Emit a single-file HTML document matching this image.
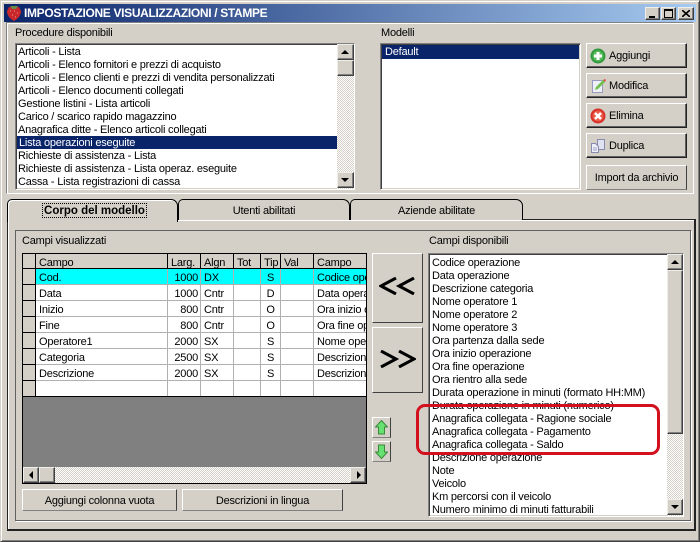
<!DOCTYPE html>
<html><head><meta charset="utf-8"><style>
html,body{margin:0;padding:0}
body{width:700px;height:542px;overflow:hidden;position:relative;background:#d4d0c8;font:11px/15px "Liberation Sans",sans-serif;letter-spacing:-.22px;color:#000}
div,span{position:absolute;box-sizing:border-box;white-space:nowrap}
.sunk{background:#fff;border:1px solid;border-color:#808080 #fff #fff #808080;box-shadow:inset 1px 1px 0 #404040,inset -1px -1px 0 #d4d0c8}
.btn{background:#d4d0c8;border:1px solid;border-color:#fff #222 #222 #fff;box-shadow:inset -1px -1px 0 #606060;text-align:center}
.flat{background:#d4d0c8;border:1px solid;border-color:#fff #808080 #808080 #fff;text-align:center}
.sb{width:16px;height:16px;background:#d4d0c8;border:1px solid;border-color:#f0eee8 #404040 #404040 #f0eee8;box-shadow:inset -1px -1px 0 #808080}
.tri{width:0;height:0;border:4px solid transparent}
.track{background-color:#fff;background-image:conic-gradient(#d4d0c8 25%,#fff 0 50%,#d4d0c8 0 75%,#fff 0);background-size:2px 2px}
.it{left:3px;height:13px}
.l1 .it{left:2px}
.hl{background:#0a246a;color:#fff}
.tab{top:199px;height:21px;background:#d4d0c8;border:1px solid #000;border-bottom:0;border-radius:5px 7px 0 0;text-align:center;line-height:22px}
.grow{left:13px;width:332px;height:16px;border-bottom:1px solid #b0b0b0}
.c{top:0;height:16px;line-height:19px;overflow:hidden;padding:0 0 0 3px;border-right:1px solid #b0b0b0}
.h{top:0;height:16px;line-height:20px;overflow:hidden;padding-left:3px;background:#d4d0c8;border-right:1px solid #000;border-bottom:1px solid #000}
.ind{left:0;width:13px;height:16px;background:#d4d0c8;border-right:1px solid #000;border-bottom:1px solid #000}
.r{text-align:right;padding:0 2px 0 0}
svg{position:absolute}
</style></head><body>

<div style="left:0;top:0;width:700px;height:542px;border:1px solid;border-color:#d4d0c8 #404040 #404040 #d4d0c8;box-shadow:inset 1px 1px 0 #fff,inset -1px -1px 0 #808080"></div>

<div style="left:4px;top:4px;width:692px;height:18px;background:linear-gradient(90deg,#0a246a,#a6caf0)"></div>
<svg style="left:6px;top:5px" width="16" height="17" viewBox="0 0 16 17"><path d="M3 2 L8 3 L13 2 L15 6 Q15 12 8 16 Q1 12 1 6Z" fill="#c8282c"/><path d="M4 1h8l-2 3H6z" fill="#6a8a4a"/><path d="M4 6h1M8 6h1M11 8h1M6 10h1M9 12h1" stroke="#f0a090"/></svg>
<div style="left:24px;top:5px;height:16px;line-height:16px;color:#fff;font-weight:bold;font-size:12px;letter-spacing:-.33px">IMPOSTAZIONE VISUALIZZAZIONI / STAMPE</div>

<div class="sb" style="left:645px;top:7px;width:15px;height:13px"><div style="left:3px;top:8px;width:6px;height:2px;background:#000"></div></div>
<div class="sb" style="left:661px;top:7px;width:15px;height:13px"><div style="left:2px;top:1px;width:9px;height:9px;border:1px solid #000;border-top-width:2px"></div></div>
<div class="sb" style="left:678px;top:7px;width:16px;height:13px"><svg style="left:3px;top:2px" width="8" height="7"><path d="M0 0L8 7M8 0L0 7" stroke="#000" stroke-width="1.6"/></svg></div>

<div style="left:6px;top:22px;width:688px;height:172px;border:1px solid;border-color:#808080 #fff #fff #808080;box-shadow:inset 1px 1px 0 #fff"></div>

<div style="left:15px;top:26px">Procedure disponibili</div>
<div class="sunk l1" style="left:15px;top:43px;width:340px;height:147px;overflow:hidden">
<div class="it" style="top:1px">Articoli - Lista</div>
<div class="it" style="top:14px">Articoli - Elenco fornitori e prezzi di acquisto</div>
<div class="it" style="top:27px">Articoli - Elenco clienti e prezzi di vendita personalizzati</div>
<div class="it" style="top:40px">Articoli - Elenco documenti collegati</div>
<div class="it" style="top:53px">Gestione listini - Lista articoli</div>
<div class="it" style="top:66px">Carico / scarico rapido magazzino</div>
<div class="it" style="top:79px">Anagrafica ditte - Elenco articoli collegati</div>
<div class="hl" style="left:1px;top:92px;width:320px;height:13px;padding-left:2px">Lista operazioni eseguite</div>
<div class="it" style="top:105px">Richieste di assistenza - Lista</div>
<div class="it" style="top:118px">Richieste di assistenza - Lista operaz. eseguite</div>
<div class="it" style="top:131px">Cassa - Lista registrazioni di cassa</div>
</div>
<div class="track" style="left:337px;top:44px;width:17px;height:145px"></div>
<div class="sb" style="left:337px;top:44px;width:17px"><div class="tri" style="left:3px;top:1px;border-bottom-color:#000"></div></div>
<div class="sb" style="left:337px;top:60px;width:17px;height:16px"></div>
<div class="sb" style="left:337px;top:172px;width:17px"><div class="tri" style="left:3px;top:5px;border-top-color:#000"></div></div>

<div style="left:381px;top:26px">Modelli</div>
<div class="sunk" style="left:380px;top:43px;width:201px;height:147px">
<div class="hl" style="left:1px;top:1px;width:197px;height:14px;padding-left:3px">Default</div>
</div>

<div class="btn" style="left:586px;top:43px;width:101px;height:25px;text-align:left;padding:5px 0 0 22px">Aggiungi</div>
<svg style="left:590px;top:48px" width="16" height="16" viewBox="0 0 16 16"><circle cx="8" cy="8" r="7.5" fill="#2f9a3c"/><circle cx="8" cy="8" r="5.5" fill="#55b85a"/><path d="M8 4v8M4 8h8" stroke="#fff" stroke-width="3"/></svg>
<div class="btn" style="left:586px;top:73px;width:101px;height:25px;text-align:left;padding:5px 0 0 22px">Modifica</div>
<svg style="left:591px;top:78px" width="16" height="16" viewBox="0 0 16 16"><path d="M1.500 2.500h10v12h-10z" fill="#eef0f8" stroke="#9a9ac0"/><path d="M4 12l1-3 7-7 2 2-7 7z" fill="#70c050"/><path d="M12 2l2 2 1-2-1-1z" fill="#d85040"/></svg>
<div class="btn" style="left:586px;top:103px;width:101px;height:25px;text-align:left;padding:5px 0 0 22px">Elimina</div>
<svg style="left:590px;top:108px" width="16" height="16" viewBox="0 0 16 16"><circle cx="8" cy="8" r="7.500" fill="#d83028"/><circle cx="8" cy="8" r="5.500" fill="#ea5a48"/><path d="M5 5l6 6M11 5l-6 6" stroke="#fff" stroke-width="2.600"/></svg>
<div class="btn" style="left:586px;top:133px;width:101px;height:25px;text-align:left;padding:5px 0 0 22px">Duplica</div>
<svg style="left:590px;top:138px" width="16" height="16" viewBox="0 0 16 16"><path d="M7.500 1.500h7v10h-7z" fill="#dfe2f0" stroke="#8a8ab0"/><path d="M1.500 5.500h4l3 3v6h-7z" fill="#eef0f8" stroke="#8a8ab0"/><path d="M3 10h4M3 12h4" stroke="#a0a0c8"/></svg>
<div class="flat" style="left:586px;top:165px;width:101px;height:25px;line-height:24px;border-color:#fff #404040 #808080 #fff">Import da archivio</div>

<div style="left:7px;top:219px;width:689px;height:312px;border:1px solid #222;border-width:1px 2px 2px 1px;box-shadow:inset 1px 1px 0 #fff"></div>
<div class="tab" style="left:178px;width:172px">Utenti abilitati</div>
<div class="tab" style="left:350px;width:173px">Aziende abilitate</div>
<div class="tab" style="left:7px;width:171px;height:23px;z-index:2;border-bottom:0;font-weight:bold;letter-spacing:0;box-shadow:inset 1px 1px 0 #fff"><span style="left:34px;top:3px;width:105px;height:15px;line-height:15px;border:1px dotted #000;font-size:11.500px">Corpo del modello</span></div>

<div style="left:15px;top:230px;width:676px;height:291px;border:1px solid #606060;box-shadow:1px 1px 0 #fff"></div>

<div style="left:22px;top:234px">Campi visualizzati</div>
<div style="left:22px;top:253px;width:345px;height:231px;background:#808080;border:1px solid #000;overflow:hidden">
<div style="left:0;top:-1px;width:345px;height:231px">
<div style="left:0;top:0;width:345px;height:16px;background:#d4d0c8;border-bottom:1px solid #000"></div>
<div class="ind" style="top:0"></div>
<div class="h" style="left:13px;width:132px">Campo</div>
<div class="h" style="left:145px;width:33px">Larg.</div>
<div class="h" style="left:178px;width:33px">Algn</div>
<div class="h" style="left:211px;width:27px">Tot</div>
<div class="h" style="left:238px;width:20px">Tip</div>
<div class="h" style="left:258px;width:33px">Val</div>
<div class="h" style="left:291px;width:54px;border-right:0">Campo</div>

<div style="left:0;top:16px;width:344px;height:128px;background:#fff;border-bottom:1px solid #000"></div>
<div class="ind" style="top:16px"></div><div class="ind" style="top:32px"></div><div class="ind" style="top:48px"></div><div class="ind" style="top:64px"></div><div class="ind" style="top:80px"></div><div class="ind" style="top:96px"></div><div class="ind" style="top:112px"></div><div class="ind" style="top:128px"></div>

<div class="grow" style="top:16px;background:#0ff"><span class="c" style="left:0;width:132px">Cod.</span><span class="c r" style="left:132px;width:33px">1000</span><span class="c" style="left:165px;width:33px">DX</span><span class="c" style="left:198px;width:27px"></span><span class="c" style="left:225px;width:20px;text-align:center;padding:0">S</span><span class="c" style="left:245px;width:33px"></span><span class="c" style="left:278px;width:54px;border:0">Codice operazione</span></div>
<div class="grow" style="top:32px"><span class="c" style="left:0;width:132px">Data</span><span class="c r" style="left:132px;width:33px">1000</span><span class="c" style="left:165px;width:33px">Cntr</span><span class="c" style="left:198px;width:27px"></span><span class="c" style="left:225px;width:20px;text-align:center;padding:0">D</span><span class="c" style="left:245px;width:33px"></span><span class="c" style="left:278px;width:54px;border:0">Data operazione</span></div>
<div class="grow" style="top:48px"><span class="c" style="left:0;width:132px">Inizio</span><span class="c r" style="left:132px;width:33px">800</span><span class="c" style="left:165px;width:33px">Cntr</span><span class="c" style="left:198px;width:27px"></span><span class="c" style="left:225px;width:20px;text-align:center;padding:0">O</span><span class="c" style="left:245px;width:33px"></span><span class="c" style="left:278px;width:54px;border:0">Ora inizio operazione</span></div>
<div class="grow" style="top:64px"><span class="c" style="left:0;width:132px">Fine</span><span class="c r" style="left:132px;width:33px">800</span><span class="c" style="left:165px;width:33px">Cntr</span><span class="c" style="left:198px;width:27px"></span><span class="c" style="left:225px;width:20px;text-align:center;padding:0">O</span><span class="c" style="left:245px;width:33px"></span><span class="c" style="left:278px;width:54px;border:0">Ora fine operazione</span></div>
<div class="grow" style="top:80px"><span class="c" style="left:0;width:132px">Operatore1</span><span class="c r" style="left:132px;width:33px">2000</span><span class="c" style="left:165px;width:33px">SX</span><span class="c" style="left:198px;width:27px"></span><span class="c" style="left:225px;width:20px;text-align:center;padding:0">S</span><span class="c" style="left:245px;width:33px"></span><span class="c" style="left:278px;width:54px;border:0">Nome operatore</span></div>
<div class="grow" style="top:96px"><span class="c" style="left:0;width:132px">Categoria</span><span class="c r" style="left:132px;width:33px">2500</span><span class="c" style="left:165px;width:33px">SX</span><span class="c" style="left:198px;width:27px"></span><span class="c" style="left:225px;width:20px;text-align:center;padding:0">S</span><span class="c" style="left:245px;width:33px"></span><span class="c" style="left:278px;width:54px;border:0">Descrizione</span></div>
<div class="grow" style="top:112px"><span class="c" style="left:0;width:132px">Descrizione</span><span class="c r" style="left:132px;width:33px">2000</span><span class="c" style="left:165px;width:33px">SX</span><span class="c" style="left:198px;width:27px"></span><span class="c" style="left:225px;width:20px;text-align:center;padding:0">S</span><span class="c" style="left:245px;width:33px"></span><span class="c" style="left:278px;width:54px;border:0">Descrizione</span></div>
<div class="grow" style="top:128px;height:15px;border:0"><span class="c" style="left:0;width:132px;height:15px"></span><span class="c" style="left:132px;width:33px;height:15px"></span><span class="c" style="left:165px;width:33px;height:15px"></span><span class="c" style="left:198px;width:27px;height:15px"></span><span class="c" style="left:225px;width:20px;height:15px"></span><span class="c" style="left:245px;width:33px;height:15px"></span></div>

<div class="track" style="left:0;top:214px;width:343px;height:16px"></div>
<div class="sb" style="left:0;top:214px"><div class="tri" style="left:1px;top:3px;border-right-color:#000"></div></div>
<div class="sb" style="left:16px;top:214px"></div>
<div class="sb" style="left:327px;top:214px"><div class="tri" style="left:6px;top:3px;border-left-color:#000"></div></div>
</div>
</div>

<div class="flat" style="left:372px;top:253px;width:51px;height:70px;border-right-color:#404040;border-bottom-color:#404040"></div>
<svg style="left:379px;top:277px" width="37" height="18"><path d="M17 1L2 9L17 17M35 1L20 9L35 17" fill="none" stroke="#000" stroke-width="3"/></svg>
<div class="flat" style="left:372px;top:327px;width:51px;height:66px;border-right-color:#404040;border-bottom-color:#404040"></div>
<svg style="left:379px;top:350px" width="37" height="18"><path d="M2 1L17 9L2 17M20 1L35 9L20 17" fill="none" stroke="#000" stroke-width="3"/></svg>

<div class="flat" style="left:372px;top:417px;width:19px;height:21px;border-color:#fff #404040 #808080 #fff"></div>
<svg style="left:375px;top:420px" width="13" height="15" viewBox="0 0 13 15"><path d="M6.500.5L12.500 7H9.500V14H3.500V7H.5Z" fill="#66e070" stroke="#3a8a3a"/></svg>
<div class="flat" style="left:372px;top:441px;width:19px;height:21px;border-color:#fff #404040 #808080 #fff"></div>
<svg style="left:375px;top:444px" width="13" height="15" viewBox="0 0 13 15"><path d="M6.500 14.500L12.500 8H9.500V1H3.500V8H.5Z" fill="#66e070" stroke="#3a8a3a"/></svg>

<div class="flat" style="left:22px;top:489px;width:155px;height:22px;line-height:22px;border-right-color:#404040;border-bottom-color:#808080">Aggiungi colonna vuota</div>
<div class="flat" style="left:182px;top:489px;width:161px;height:22px;line-height:22px;border-right-color:#404040;border-bottom-color:#808080">Descrizioni in lingua</div>

<div style="left:429px;top:234px">Campi disponibili</div>
<div class="sunk" style="left:428px;top:253px;width:256px;height:264px;overflow:hidden">
<div class="it" style="top:2px">Codice operazione</div>
<div class="it" style="top:15px">Data operazione</div>
<div class="it" style="top:28px">Descrizione categoria</div>
<div class="it" style="top:41px">Nome operatore 1</div>
<div class="it" style="top:54px">Nome operatore 2</div>
<div class="it" style="top:67px">Nome operatore 3</div>
<div class="it" style="top:80px">Ora partenza dalla sede</div>
<div class="it" style="top:93px">Ora inizio operazione</div>
<div class="it" style="top:106px">Ora fine operazione</div>
<div class="it" style="top:119px">Ora rientro alla sede</div>
<div class="it" style="top:132px">Durata operazione in minuti (formato HH:MM)</div>
<div class="it" style="top:145px">Durata operazione in minuti (numerico)</div>
<div class="it" style="top:158px">Anagrafica collegata - Ragione sociale</div>
<div class="it" style="top:171px">Anagrafica collegata - Pagamento</div>
<div class="it" style="top:184px">Anagrafica collegata - Saldo</div>
<div class="it" style="top:197px">Descrizione operazione</div>
<div class="it" style="top:210px">Note</div>
<div class="it" style="top:223px">Veicolo</div>
<div class="it" style="top:236px">Km percorsi con il veicolo</div>
<div class="it" style="top:249px">Numero minimo di minuti fatturabili</div>
</div>
<div class="track" style="left:667px;top:254px;width:16px;height:262px"></div>
<div class="sb" style="left:667px;top:254px"><div class="tri" style="left:3px;top:1px;border-bottom-color:#000"></div></div>
<div class="sb" style="left:667px;top:270px;height:164px"></div>
<div class="sb" style="left:667px;top:499px"><div class="tri" style="left:3px;top:5px;border-top-color:#000"></div></div>

<div style="left:416px;top:404px;width:244px;height:51px;border:3px solid #d2101e;border-radius:9px"></div>
</body></html>
